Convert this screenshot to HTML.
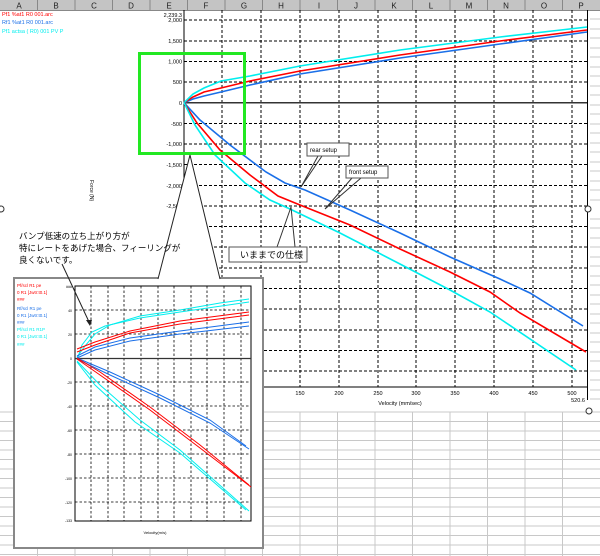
<!DOCTYPE html>
<html><head><meta charset="utf-8"><style>
html,body{margin:0;padding:0;width:600px;height:556px;overflow:hidden;background:#fff;font-family:"Liberation Sans","Noto Sans CJK JP",sans-serif}
</style></head><body>
<svg width="600" height="556" viewBox="0 0 600 556" xmlns="http://www.w3.org/2000/svg" font-family="Liberation Sans, Noto Sans CJK JP, sans-serif">
<!-- spreadsheet background rows -->
<g stroke="#c8c8c8" stroke-width="1">
<line x1="0" y1="412" x2="600" y2="412"/><line x1="0" y1="421.5" x2="600" y2="421.5"/><line x1="0" y1="431" x2="600" y2="431"/><line x1="0" y1="440.5" x2="600" y2="440.5"/><line x1="0" y1="450" x2="600" y2="450"/><line x1="0" y1="459.5" x2="600" y2="459.5"/><line x1="0" y1="469" x2="600" y2="469"/><line x1="0" y1="478.5" x2="600" y2="478.5"/><line x1="0" y1="488" x2="600" y2="488"/><line x1="0" y1="497.5" x2="600" y2="497.5"/><line x1="0" y1="507" x2="600" y2="507"/><line x1="0" y1="516.5" x2="600" y2="516.5"/><line x1="0" y1="526" x2="600" y2="526"/><line x1="0" y1="535.5" x2="600" y2="535.5"/><line x1="0" y1="545" x2="600" y2="545"/><line x1="0" y1="554.5" x2="600" y2="554.5"/>
<line x1="37.5" y1="412" x2="37.5" y2="556"/><line x1="75" y1="412" x2="75" y2="556"/><line x1="112.5" y1="412" x2="112.5" y2="556"/><line x1="150" y1="412" x2="150" y2="556"/><line x1="187.5" y1="412" x2="187.5" y2="556"/><line x1="225" y1="412" x2="225" y2="556"/><line x1="262.5" y1="412" x2="262.5" y2="556"/><line x1="300" y1="412" x2="300" y2="556"/><line x1="337.5" y1="412" x2="337.5" y2="556"/><line x1="375" y1="412" x2="375" y2="556"/><line x1="412.5" y1="412" x2="412.5" y2="556"/><line x1="450" y1="412" x2="450" y2="556"/><line x1="487.5" y1="412" x2="487.5" y2="556"/><line x1="525" y1="412" x2="525" y2="556"/><line x1="562.5" y1="412" x2="562.5" y2="556"/>
<line x1="590" y1="19" x2="600" y2="19"/><line x1="590" y1="29" x2="600" y2="29"/><line x1="590" y1="38" x2="600" y2="38"/><line x1="590" y1="48" x2="600" y2="48"/><line x1="590" y1="57" x2="600" y2="57"/><line x1="590" y1="67" x2="600" y2="67"/><line x1="590" y1="76" x2="600" y2="76"/><line x1="590" y1="86" x2="600" y2="86"/><line x1="590" y1="95" x2="600" y2="95"/><line x1="590" y1="105" x2="600" y2="105"/><line x1="590" y1="114" x2="600" y2="114"/><line x1="590" y1="124" x2="600" y2="124"/><line x1="590" y1="133" x2="600" y2="133"/><line x1="590" y1="143" x2="600" y2="143"/><line x1="590" y1="152" x2="600" y2="152"/><line x1="590" y1="162" x2="600" y2="162"/><line x1="590" y1="171" x2="600" y2="171"/><line x1="590" y1="181" x2="600" y2="181"/><line x1="590" y1="190" x2="600" y2="190"/><line x1="590" y1="200" x2="600" y2="200"/><line x1="590" y1="219" x2="600" y2="219"/><line x1="590" y1="228" x2="600" y2="228"/><line x1="590" y1="238" x2="600" y2="238"/><line x1="590" y1="247" x2="600" y2="247"/><line x1="590" y1="257" x2="600" y2="257"/><line x1="590" y1="266" x2="600" y2="266"/><line x1="590" y1="276" x2="600" y2="276"/><line x1="590" y1="285" x2="600" y2="285"/><line x1="590" y1="295" x2="600" y2="295"/><line x1="590" y1="304" x2="600" y2="304"/><line x1="590" y1="314" x2="600" y2="314"/><line x1="590" y1="323" x2="600" y2="323"/><line x1="590" y1="333" x2="600" y2="333"/><line x1="590" y1="342" x2="600" y2="342"/><line x1="590" y1="352" x2="600" y2="352"/><line x1="590" y1="361" x2="600" y2="361"/><line x1="590" y1="371" x2="600" y2="371"/><line x1="590" y1="380" x2="600" y2="380"/><line x1="590" y1="390" x2="600" y2="390"/><line x1="590" y1="399" x2="600" y2="399"/>
</g>
<!-- header -->
<rect x="0" y="0" width="600" height="10" fill="#c4c4c4"/>
<g stroke="#888" stroke-width="1"><line x1="0" y1="10.5" x2="600" y2="10.5"/>
<line x1="37.5" y1="0" x2="37.5" y2="10"/><line x1="75" y1="0" x2="75" y2="10"/><line x1="112.5" y1="0" x2="112.5" y2="10"/><line x1="150" y1="0" x2="150" y2="10"/><line x1="187.5" y1="0" x2="187.5" y2="10"/><line x1="225" y1="0" x2="225" y2="10"/><line x1="262.5" y1="0" x2="262.5" y2="10"/><line x1="300" y1="0" x2="300" y2="10"/><line x1="337.5" y1="0" x2="337.5" y2="10"/><line x1="375" y1="0" x2="375" y2="10"/><line x1="412.5" y1="0" x2="412.5" y2="10"/><line x1="450" y1="0" x2="450" y2="10"/><line x1="487.5" y1="0" x2="487.5" y2="10"/><line x1="525" y1="0" x2="525" y2="10"/><line x1="562.5" y1="0" x2="562.5" y2="10"/></g>
<g font-size="8" fill="#222" text-anchor="middle">
<text x="19" y="8.5">A</text><text x="56" y="8.5">B</text><text x="94" y="8.5">C</text><text x="131" y="8.5">D</text><text x="169" y="8.5">E</text><text x="206" y="8.5">F</text><text x="244" y="8.5">G</text><text x="281" y="8.5">H</text><text x="319" y="8.5">I</text><text x="356" y="8.5">J</text><text x="394" y="8.5">K</text><text x="431" y="8.5">L</text><text x="469" y="8.5">M</text><text x="506" y="8.5">N</text><text x="544" y="8.5">O</text><text x="581" y="8.5">P</text></g>
<!-- legend -->
<g font-size="5.5"><text x="2" y="16" fill="#f00">Pf1 %at1 R0 001.arc</text><text x="2" y="24" fill="#1a6fe8">Rf1 %at1 R0 001.arc</text><text x="2" y="33" fill="#0ee">Pf1 actsa ( R0) 001 PV P</text></g>
<!-- main plot grid -->
<g stroke="#000" stroke-width="1" stroke-dasharray="3,2">
<line x1="184" y1="20" x2="587" y2="20"/><line x1="184" y1="41" x2="587" y2="41"/><line x1="184" y1="61.5" x2="587" y2="61.5"/><line x1="184" y1="82" x2="587" y2="82"/>
<line x1="184" y1="123.5" x2="587" y2="123.5"/><line x1="184" y1="144" x2="587" y2="144"/><line x1="184" y1="164.5" x2="587" y2="164.5"/><line x1="184" y1="185.5" x2="587" y2="185.5"/><line x1="184" y1="206" x2="587" y2="206"/><line x1="184" y1="226.5" x2="587" y2="226.5"/><line x1="184" y1="247" x2="587" y2="247"/><line x1="184" y1="268" x2="587" y2="268"/><line x1="184" y1="288.5" x2="587" y2="288.5"/><line x1="184" y1="309" x2="587" y2="309"/><line x1="184" y1="330" x2="587" y2="330"/><line x1="184" y1="350.5" x2="587" y2="350.5"/><line x1="184" y1="371" x2="587" y2="371"/>
<line x1="222" y1="10" x2="222" y2="387"/><line x1="261" y1="10" x2="261" y2="387"/><line x1="300" y1="10" x2="300" y2="387"/><line x1="339" y1="10" x2="339" y2="387"/><line x1="378" y1="10" x2="378" y2="387"/><line x1="416" y1="10" x2="416" y2="387"/><line x1="455" y1="10" x2="455" y2="387"/><line x1="494" y1="10" x2="494" y2="387"/><line x1="533" y1="10" x2="533" y2="387"/><line x1="572" y1="10" x2="572" y2="387"/></g>
<g stroke="#000" stroke-width="1"><line x1="184" y1="10" x2="184" y2="387"/><line x1="184" y1="387" x2="588" y2="387"/><line x1="587.5" y1="10" x2="587.5" y2="400"/></g>
<line x1="184" y1="102.7" x2="587" y2="102.7" stroke="#333" stroke-width="1.5"/>
<g font-size="5.5" fill="#000" text-anchor="end">
<text x="182" y="17">2,239.3</text><text x="182" y="22">2,000</text><text x="182" y="43">1,500</text><text x="182" y="63.5">1,000</text><text x="182" y="84">500</text><text x="182" y="105">0</text><text x="182" y="126">-500</text><text x="182" y="146">-1,000</text><text x="182" y="167">-1,500</text><text x="182" y="188">-2,000</text><text x="182" y="208">-2,500</text><text x="182" y="229">-3,0</text><text x="182" y="250">-3</text></g>
<g font-size="5.5" fill="#000" text-anchor="middle"><text x="300" y="395">150</text><text x="339" y="395">200</text><text x="378" y="395">250</text><text x="416" y="395">300</text><text x="455" y="395">350</text><text x="494" y="395">400</text><text x="533" y="395">450</text><text x="572" y="395">500</text><text x="578" y="402">520.6</text><text x="400" y="405">Velocity (mm/sec)</text></g>
<text x="90" y="180" font-size="5" transform="rotate(90 90 180)">Force (N)</text>
<!-- main curves -->
<g fill="none" stroke-width="1.6">
<polyline stroke="#1a6fe8" points="184,102.7 193,99 204,96 221,92 250,85 300,74 400,58 500,44 587,32"/>
<polyline stroke="#f00" points="184,102.7 193,97 204,92 221,88 250,81 300,71 400,55 500,41 587,30"/>
<polyline stroke="#0ee" points="184,102.7 193,94 204,88 221,81 250,76 300,66 400,50 500,37 587,27"/>
<polyline stroke="#1a6fe8" points="184,102.7 200,120 230,145 266,172 285,183 305,190 350,210 400,233 450,257 500,279 530,293 583,326"/>
<polyline stroke="#f00" points="184,102.7 197,123 220,150 250,175 278,196 300,205 350,225 400,249 450,272 490,292 520,313 586,352"/>
<polyline stroke="#0ee" points="184,102.7 195,125 215,155 245,183 270,200 290,209 340,233 400,264 450,290 490,312 576,370"/>
</g>
<!-- annotations -->
<g stroke="#333" stroke-width="1" fill="none">
<polyline points="318,156 301,187 322,156"/>
<polyline points="352,178 325,209 361,178"/>
<polyline points="277,247 291,207 295,247"/>
</g>
<g stroke="#555" stroke-width="1" fill="#fff"><rect x="307" y="143" width="42" height="13"/><rect x="346" y="166" width="42" height="12"/><rect x="229" y="247" width="78" height="15"/></g>
<g font-size="6" fill="#000"><text x="310" y="152">rear setup</text><text x="349" y="174">front setup</text></g>
<text x="240" y="258" font-size="9" fill="#000">いままでの仕様</text>
<!-- green box -->
<rect x="139.5" y="53.5" width="105" height="100" fill="none" stroke="#22e822" stroke-width="3"/>
<!-- inset box -->
<rect x="14" y="278" width="249" height="270" fill="#fff" stroke="#888" stroke-width="2"/>
<polyline points="158,279 190,155 220,279" fill="#fff" stroke="#222" stroke-width="1"/>
<line x1="159" y1="278" x2="219" y2="278" stroke="#fff" stroke-width="2.5"/>
<g font-size="8.5" fill="#000"><text x="19" y="239">バンプ低速の立ち上がり方が</text><text x="19" y="251">特にレートをあげた場合、フィーリングが</text><text x="19" y="263">良くないです。</text></g>
<!-- inset grid -->
<g stroke="#000" stroke-width="0.8" stroke-dasharray="2.5,2">
<line x1="75" y1="310" x2="251" y2="310"/><line x1="75" y1="334" x2="251" y2="334"/><line x1="75" y1="382" x2="251" y2="382"/><line x1="75" y1="406" x2="251" y2="406"/><line x1="75" y1="430" x2="251" y2="430"/><line x1="75" y1="454" x2="251" y2="454"/><line x1="75" y1="478" x2="251" y2="478"/><line x1="75" y1="502" x2="251" y2="502"/>
<line x1="91" y1="286" x2="91" y2="521"/><line x1="108" y1="286" x2="108" y2="521"/><line x1="124" y1="286" x2="124" y2="521"/><line x1="141" y1="286" x2="141" y2="521"/><line x1="158" y1="286" x2="158" y2="521"/><line x1="174" y1="286" x2="174" y2="521"/><line x1="191" y1="286" x2="191" y2="521"/><line x1="207" y1="286" x2="207" y2="521"/><line x1="224" y1="286" x2="224" y2="521"/><line x1="241" y1="286" x2="241" y2="521"/></g>
<rect x="75" y="286" width="176" height="235" fill="none" stroke="#000" stroke-width="1"/>
<line x1="75" y1="358.5" x2="251" y2="358.5" stroke="#333" stroke-width="1.2"/>
<g font-size="3.5" fill="#000" text-anchor="end"><text x="72" y="288">###</text><text x="72" y="312">40</text><text x="72" y="336">20</text><text x="72" y="360">0</text><text x="72" y="384">-20</text><text x="72" y="408">-40</text><text x="72" y="432">-60</text><text x="72" y="456">-80</text><text x="72" y="480">-100</text><text x="72" y="504">-120</text><text x="72" y="522">-133</text></g>
<text x="155" y="534" font-size="4" text-anchor="middle">Velocity(m/s)</text>
<g font-size="4.5"><text x="17" y="287" fill="#f00">Pf/scl R1 pe</text><text x="17" y="294" fill="#f00">0 R1 [Jwtr:t0.1]</text><text x="17" y="301" fill="#f00">###</text><text x="17" y="310" fill="#1a6fe8">Rf/scl R1 pe</text><text x="17" y="317" fill="#1a6fe8">0 R1 [Jwtr:t0.1]</text><text x="17" y="324" fill="#1a6fe8">###</text><text x="17" y="331" fill="#0ee">Pf/scl R1 R1P</text><text x="17" y="338" fill="#0ee">0 R1 [Jwtr:t0.1]</text><text x="17" y="346" fill="#0ee">###</text></g>
<line x1="62" y1="264" x2="90" y2="324" stroke="#222" stroke-width="1"/>
<polygon points="90,326 86,320 92,320" fill="#222"/>
<!-- inset curves -->
<g fill="none" stroke-width="1">
<polyline stroke="#0ee" points="77,357 85,346 95,334 110,325 140,316 180,310 220,303 249,299"/>
<polyline stroke="#0ee" points="77,360 82,345 92,332 105,326 140,318 180,312 249,302"/>
<polyline stroke="#f00" points="77,352 95,345 130,333 180,324 249,315"/>
<polyline stroke="#f00" points="77,349 95,342 130,331 180,321 249,312"/>
<polyline stroke="#1a6fe8" points="77,358 95,350 130,341 180,334 249,326"/>
<polyline stroke="#1a6fe8" points="77,356 95,347 130,338 180,331 249,322"/>
<polyline stroke="#1a6fe8" points="77,359 110,375 160,398 210,423 249,449"/>
<polyline stroke="#1a6fe8" points="77,358 110,372 160,395 210,420 246,446"/>
<polyline stroke="#f00" points="77,359 100,375 150,410 200,448 251,487"/>
<polyline stroke="#f00" points="77,358 100,372 150,407 200,445 249,485"/>
<polyline stroke="#0ee" points="77,361 100,385 140,420 180,450 249,511"/>
<polyline stroke="#0ee" points="77,362 95,385 135,422 180,453 246,510"/>
</g>
<!-- handles -->
<g fill="#fff" stroke="#333" stroke-width="1"><circle cx="1" cy="209" r="3"/><circle cx="588" cy="209" r="3"/><circle cx="589" cy="411" r="3"/></g>
</svg>
</body></html>
